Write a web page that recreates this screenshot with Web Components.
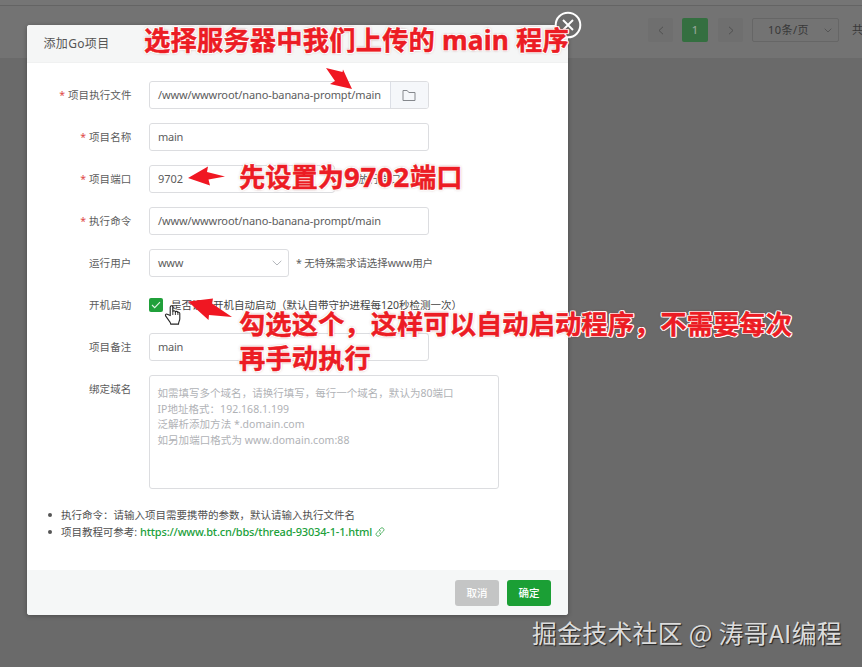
<!DOCTYPE html>
<html lang="zh-CN">
<head>
<meta charset="utf-8">
<title>添加Go项目</title>
<style>
html,body{margin:0;padding:0;width:862px;height:667px;overflow:hidden;background:#6a6a6a;
font-family:"Noto Sans","Noto Sans CJK SC",sans-serif;font-size:10.5px;line-height:16px;color:#5c5c5c}
</style>
</head>
<body>
<app-screen></app-screen>
<script>
const define=(name,html,init)=>customElements.define(name,class extends HTMLElement{
  connectedCallback(){
    if(this.shadowRoot)return;
    this.attachShadow({mode:'open'}).innerHTML=html;
    if(init)init.call(this,this.shadowRoot);
  }
});

/* Single-line text; "w" tracks it out to a given width. */
define('ui-text',`<style>:host{display:inline-block;white-space:pre;flex:none}</style><span><slot></slot></span>`,function(root){
  const w=parseFloat(this.getAttribute('w'));
  if(!w)return;
  const n=[...this.textContent].length;
  const now=root.querySelector('span').getBoundingClientRect().width;
  this.style.letterSpacing=((w-now)/n).toFixed(3)+'px';
});

define('form-row',`<style>
:host{display:flex;align-items:center;height:28px;margin-bottom:14px}
:host([top]){align-items:flex-start;height:114px;margin-bottom:0}
.l{width:104.5px;margin-right:17.5px;display:flex;justify-content:flex-end;align-items:center;flex:none;height:28px}
i{font-style:normal;color:#e04848;margin-right:3px;display:none}
:host([req]) i{display:block}
.c{display:flex;align-items:center}
</style><div class="l"><i>*</i><slot name="label"></slot></div><div class="c"><slot></slot></div>`);

define('text-field',`<style>
:host{display:flex;align-items:center;box-sizing:border-box;width:279.5px;height:28px;border:1px solid #dcdde0;border-radius:3px;background:#fff;padding-left:8px;overflow:hidden}
</style><slot></slot><slot name="end"></slot>`);

define('folder-button',`<style>
:host{display:flex;align-items:center;justify-content:center;box-sizing:border-box;width:38px;height:26px;margin-left:auto;border-left:1px solid #dcdfe6;background:#f5f7fa}
</style><svg width="14" height="13" viewBox="0 0 14 13" fill="none" stroke="#85888d" stroke-width="1"><path d="M1 1.5h4.2l1.6 2h6.2v8H1z"/></svg>`);

define('user-select',`<style>
:host{display:flex;align-items:center;box-sizing:border-box;width:140px;height:28px;border:1px solid #dcdde0;border-radius:3px;padding:0 6px 0 8px;justify-content:space-between}
</style><slot></slot><svg width="10" height="6" fill="none" stroke="#b3b6bb"><path d="M.7.8 5 5 9.3.8"/></svg>`);

define('check-box',`<style>
:host{display:flex;width:14px;height:14px;border-radius:2px;background:#20a03a;align-items:center;justify-content:center;margin-right:8px}
</style><svg width="10" height="8" fill="none" stroke="#e2f6e5" stroke-width="1.1"><path d="M1 4l2.7 2.7L9 1.2"/></svg>`);

define('domain-area',`<style>
:host{display:block;box-sizing:border-box;width:349.5px;height:114px;border:1px solid #dcdde0;border-radius:3px;padding:9px 7.5px;color:#b0b2b6}
div{height:15.7px;line-height:16px}
</style><div><ui-text w="296">如需填写多个域名，请换行填写，每行一个域名，默认为80端口</ui-text></div><div><ui-text w="131.5">IP地址格式：192.168.1.199</ui-text></div><div><ui-text w="147">泛解析添加方法 *.domain.com</ui-text></div><div><ui-text w="192">如另加端口格式为 www.domain.com:88</ui-text></div>`);

define('help-list',`<style>
ul{margin:17px 0 0;padding:0 0 0 34px;list-style:none;color:#505050}
li{display:flex;align-items:center;height:17.5px}
li::before{content:"";width:4px;height:4px;border-radius:50%;background:#555;margin:0 9px 0 -13px}
.a{color:#20a03a;font-size:11px;font-weight:500;margin-left:3px}svg{margin-left:3px}
</style><ul><li><ui-text w="294">执行命令：请输入项目需要携带的参数，默认请输入执行文件名</ui-text></li>
<li><ui-text w="76">项目教程可参考:</ui-text><ui-text class="a" w="232">https://www.bt.cn/bbs/thread-93034-1-1.html</ui-text><svg width="10" height="10" viewBox="0 0 10 10" fill="none" stroke="#58b56a" stroke-width="1"><path d="M4 3l1.6-1.6a1.9 1.9 0 0 1 2.8 2.8L6.7 5.8a1.9 1.9 0 0 1-2.7 0M6 7L4.4 8.6a1.9 1.9 0 0 1-2.8-2.8L3.3 4.2a1.9 1.9 0 0 1 2.7 0"/></svg></li></ul>`);

define('ui-button',`<style>
:host{display:flex;align-items:center;justify-content:center;width:44px;height:26px;border-radius:3px;background:#c4c5c5;color:#fff;font-weight:500;font-family:"Noto Sans CJK SC",sans-serif}
:host([primary]){background:#1b9f35}
</style><slot></slot>`);

define('go-dialog',`<style>
:host{display:flex;flex-direction:column;width:541px;height:590px;background:#fff;border-radius:3px;overflow:hidden;box-shadow:0 1px 5px rgba(0,0,0,.3)}
header{height:38px;background:#f5f6f6;border-bottom:1px solid #f0f1f1;display:flex;align-items:center;padding-left:16.5px;font-size:12px;color:#555;flex:none;box-sizing:border-box}
main{flex:1;padding-top:18px;display:flex;flex-direction:column}
footer{height:45px;background:#f5f7f7;display:flex;align-items:center;justify-content:flex-end;gap:8px;padding-right:17px;flex:none}
.h{margin-left:7px}
</style>
<header><ui-text w="66">添加Go项目</ui-text></header>
<main>
<form-row req><ui-text slot="label" w="63.5">项目执行文件</ui-text><text-field><ui-text w="223" style="font-size:11px">/www/wwwroot/nano-banana-prompt/main</ui-text><folder-button slot="end"></folder-button></text-field></form-row>
<form-row req><ui-text slot="label" w="42.5">项目名称</ui-text><text-field><ui-text w="25" style="font-size:11px">main</ui-text></text-field></form-row>
<form-row req><ui-text slot="label" w="42.5">项目端口</ui-text><text-field style="width:186px"><ui-text w="25" style="font-size:11px">9702</ui-text></text-field><ui-text w="43" style="margin-left:23px">放行端口</ui-text></form-row>
<form-row req><ui-text slot="label" w="42.5">执行命令</ui-text><text-field><ui-text w="223" style="font-size:11px">/www/wwwroot/nano-banana-prompt/main</ui-text></text-field></form-row>
<form-row><ui-text slot="label" w="42.5">运行用户</ui-text><user-select><ui-text w="25" style="font-size:11px">www</ui-text></user-select><ui-text class="h" w="137">* 无特殊需求请选择www用户</ui-text></form-row>
<form-row><ui-text slot="label" w="42.5">开机启动</ui-text><check-box></check-box><ui-text w="291" style="color:#444">是否设置开机自动启动（默认自带守护进程每120秒检测一次）</ui-text></form-row>
<form-row><ui-text slot="label" w="42.5">项目备注</ui-text><text-field><ui-text w="25" style="font-size:11px">main</ui-text></text-field></form-row>
<form-row top><ui-text slot="label" w="42.5">绑定域名</ui-text><domain-area></domain-area></form-row>
<help-list></help-list>
</main>
<footer><ui-button>取消</ui-button><ui-button primary>确定</ui-button></footer>`);

define('page-bar',`<style>
:host{display:flex;align-items:center;box-sizing:border-box;height:58px;background:#737373;border-top:5px solid #757575;box-shadow:inset 0 1px #646464;padding-left:648px;color:#383838;font-size:11px;overflow:hidden}
div{box-sizing:border-box;height:24px;display:flex;align-items:center;justify-content:center;flex:none;border-radius:2px;margin-top:-3px}
.b{width:25px;background:#6f6f6f}.p{width:26px;margin:-3px 10px 0 9px;background:#346f40;color:#92a495;font-weight:500}
.s{width:87px;border:1px solid #666;margin:-3px 13px 0 9px;justify-content:space-between;padding:0 6px 0 15px}
</style><div class="b"><svg width="6" height="9" fill="none" stroke="#515151"><path d="M5 .8 1 4.5l4 3.7"/></svg></div><div class="p">1</div><div class="b"><svg width="6" height="9" fill="none" stroke="#515151"><path d="M1 .8l4 3.7-4 3.7"/></svg></div><div class="s"><ui-text w="41">10条/页</ui-text><svg width="8" height="5" fill="none" stroke="#555"><path d="M.7.7 4 4 7.3.7"/></svg></div><div><ui-text>共</ui-text></div>`);

define('close-button',`<style>:host{display:block;width:28px;height:28px}svg{display:block}</style>
<svg width="28" height="28" viewBox="0 0 28 28" fill="none" stroke="#fff"><circle cx="14" cy="14" r="12.3" fill="#6c6c6c" stroke-width="2"/><path d="M9 9l10 10M19 9L9 19" stroke-width="1.9"/></svg>`);

define('red-note',`<style>
:host{display:block;position:absolute;font:700 26.3px/34px "Noto Sans","Noto Sans CJK SC",sans-serif;color:#ec1c24;-webkit-text-stroke:.45px #ec1c24;text-shadow:1.3px 0 #fff,-1.3px 0 #fff,0 1.3px #fff,0 -1.3px #fff,1px 1px #fff,-1px 1px #fff,1px -1px #fff,-1px -1px #fff,0 0 3px rgba(120,30,30,.7);white-space:pre}
</style><slot></slot>`);

define('note-arrows',`<style>:host{position:absolute;inset:0}svg{display:block}</style>
<svg width="862" height="667"><g fill="#f01722">
<path d="M326 68l16.500 4 .5-2.500 9 19.500-22-5 5-3z"/>
<path d="M188 178l20-11.500-1 5.500 18 4.500-16.500 3 1.500 6z"/>
<path d="M188 301.500l25-3-1 5 20 13.500-23-2-.5 5z"/></g>
<path d="M170.200 315.500v-8.300c0-2 2.600-2 2.600 0v4.200c.5-1 2.400-.9 2.600.4.700-.8 2.200-.5 2.400.6.800-.6 2 .1 2 1.200v5.200c0 2-1.200 2.500-1.300 5.300h-7.700c-.4-2.600-2.600-4-5.200-8.200-.8-1.600 1-2.500 2.300-1.300z" fill="#fff" stroke="#252525" stroke-width="1.100"/>
<path d="M172.800 311v4m2.600-3.500v3.500m2.500-3v3" stroke="#252525" stroke-width=".9"/></svg>`);

define('water-mark',`<style>:host{position:absolute;left:532px;top:614px;font:400 24.800px/36px "Noto Sans CJK SC",sans-serif;color:#dcdcdc;text-shadow:1px 1px 1px #222}</style><ui-text w="310">掘金技术社区 @ 涛哥AI编程</ui-text>`);

define('app-screen',`<style>
:host{display:block;position:relative;width:862px;height:667px;overflow:hidden;background:#6a6a6a}
go-dialog{position:absolute;left:27px;top:25px}
close-button{position:absolute;left:554px;top:11px}
</style><page-bar></page-bar><go-dialog></go-dialog><close-button></close-button>
<red-note style="left:144px;top:23px"><ui-text w="425">选择服务器中我们上传的 main 程序</ui-text></red-note>
<red-note style="left:239px;top:160px"><ui-text w="105">先设置为</ui-text><ui-text w="66" style="font-size:27.5px">9702</ui-text><ui-text w="52.500">端口</ui-text></red-note>
<red-note style="left:239px;top:307px"><ui-text w="553">勾选这个，这样可以自动启动程序，不需要每次</ui-text><br><ui-text w="132">再手动执行</ui-text></red-note>
<note-arrows></note-arrows><water-mark></water-mark>`);
</script>
</body>
</html>
